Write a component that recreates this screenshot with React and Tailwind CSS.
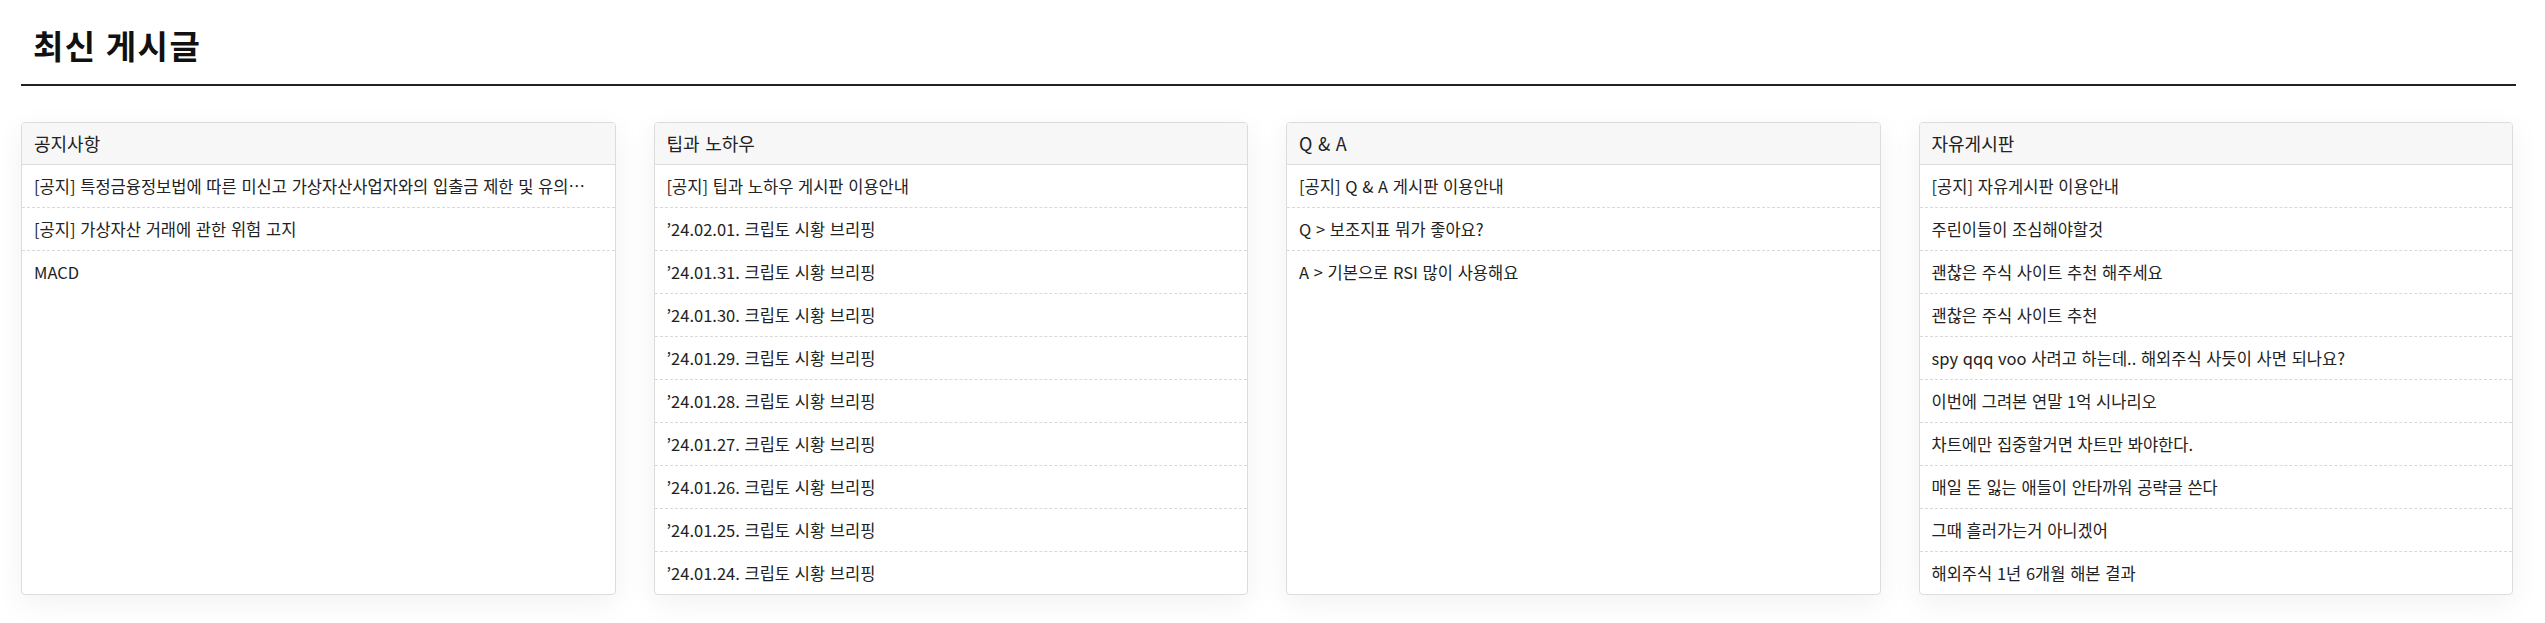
const boards = [
  {
    title: "공지사항",
    posts: [
      "[공지] 특정금융정보법에 따른 미신고 가상자산사업자와의 입출금 제한 및 유의사항 안내",
      "[공지] 가상자산 거래에 관한 위험 고지",
      "MACD",
    ],
  },
  {
    title: "팁과 노하우",
    posts: [
      "[공지] 팁과 노하우 게시판 이용안내",
      "’24.02.01. 크립토 시황 브리핑",
      "’24.01.31. 크립토 시황 브리핑",
      "’24.01.30. 크립토 시황 브리핑",
      "’24.01.29. 크립토 시황 브리핑",
      "’24.01.28. 크립토 시황 브리핑",
      "’24.01.27. 크립토 시황 브리핑",
      "’24.01.26. 크립토 시황 브리핑",
      "’24.01.25. 크립토 시황 브리핑",
      "’24.01.24. 크립토 시황 브리핑",
    ],
  },
  {
    title: "Q & A",
    posts: [
      "[공지] Q & A 게시판 이용안내",
      "Q > 보조지표 뭐가 좋아요?",
      "A > 기본으로 RSI 많이 사용해요",
    ],
  },
  {
    title: "자유게시판",
    posts: [
      "[공지] 자유게시판 이용안내",
      "주린이들이 조심해야할것",
      "괜찮은 주식 사이트 추천 해주세요",
      "괜찮은 주식 사이트 추천",
      "spy qqq voo 사려고 하는데.. 해외주식 사듯이 사면 되나요?",
      "이번에 그려본 연말 1억 시나리오",
      "차트에만 집중할거면 차트만 봐야한다.",
      "매일 돈 잃는 애들이 안타까워 공략글 쓴다",
      "그때 흘러가는거 아니겠어",
      "해외주식 1년 6개월 해본 결과",
    ],
  },
];

const BoardCard = ({ board }) => {
  return (
    <div className="flex flex-col min-w-0 bg-white border border-[#dcdcdc] rounded-[4px] overflow-hidden shadow-[0_8px_30px_rgba(0,0,0,0.06)]">
      <div className="h-[42px] flex items-center px-3 bg-[#f7f7f7] border-b border-[#dcdcdc] text-[18px] text-[#222] [word-spacing:1.5px]">
        {board.title}
      </div>
      <ul className="flex flex-col">
        {board.posts.map((post, i) => (
          <li
            key={i}
            className="h-[43px] flex items-center pl-3 pr-5 border-b border-dashed border-[#d9d9d9] last:border-b-0 last:h-[42px] text-[16.5px] text-[#222] [word-spacing:1px] min-w-0"
          >
            <span className="truncate">{post}</span>
          </li>
        ))}
      </ul>
    </div>
  );
};

export default function App() {
  return (
    <div className="w-[2545px] h-[623px] bg-white pl-[21px] pr-[29px] font-['Noto_Sans_CJK_KR','Noto_Sans',sans-serif]">
      <div className="pt-[26px] pb-[20px] px-3 border-b-2 border-[#222]">
        <h1 className="text-[33px] leading-[38px] font-bold tracking-[1.5px] text-[#111]">최신 게시글</h1>
      </div>
      <div className="grid grid-cols-4 gap-[38px] mt-[36px] mr-[3px]">
        {boards.map((board) => (
          <BoardCard key={board.title} board={board} />
        ))}
      </div>
    </div>
  );
}
